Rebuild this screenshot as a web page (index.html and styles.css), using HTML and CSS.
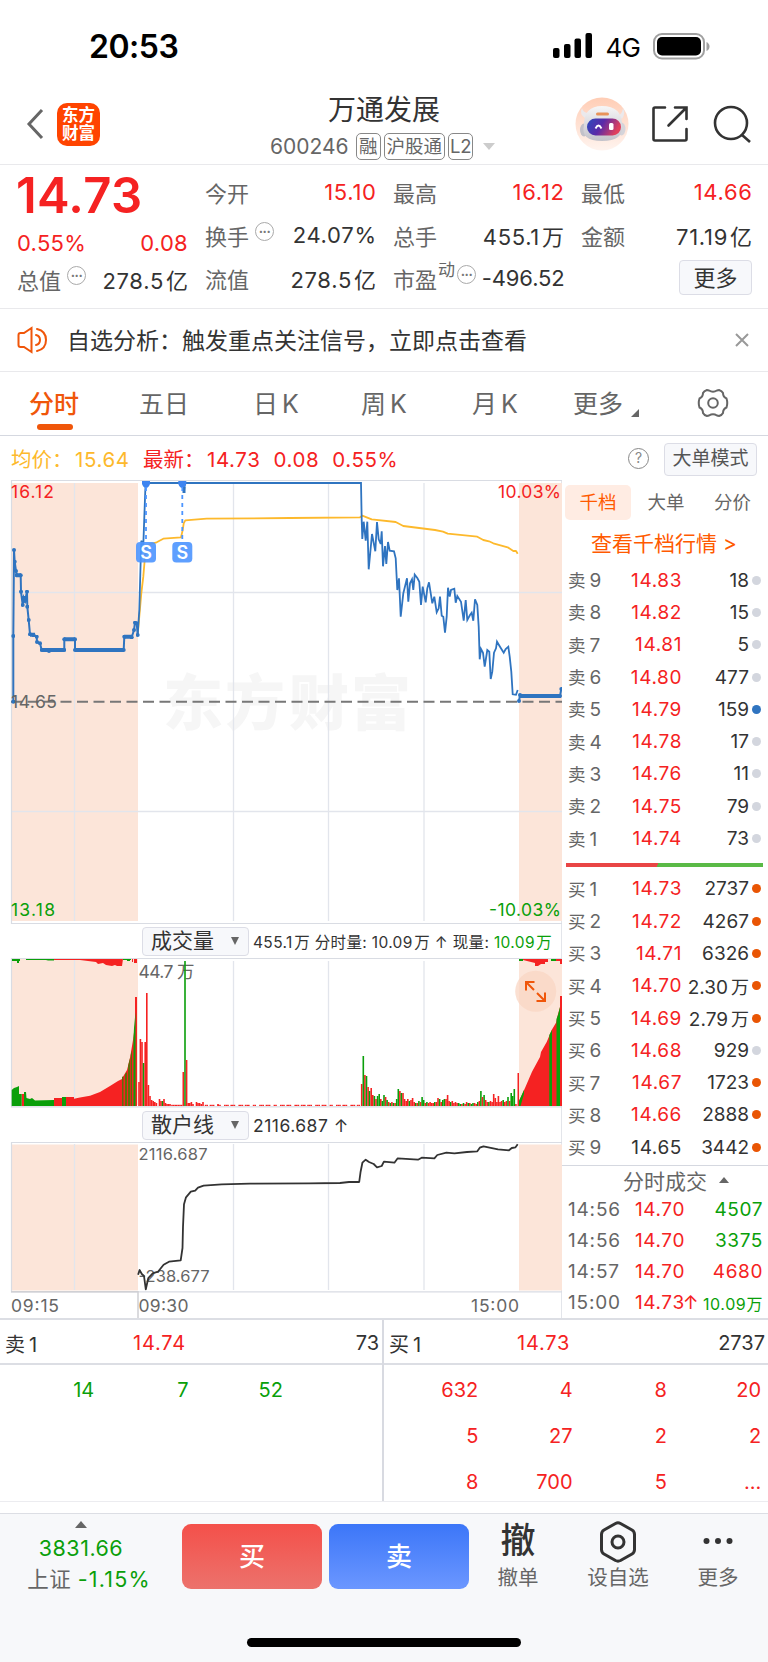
FILE: index.html
```html
<!DOCTYPE html>
<html lang="zh-CN">
<head>
    <meta charset="UTF-8">
    <meta name="viewport" content="width=device-width, initial-scale=1.0">
    <title>万通发展 600246</title>
    <link rel="stylesheet" href="styles.css">
</head>
<body>
    <div class="status-bar">
        <span class="time">20:53</span>
        <div class="status-icons">
            <svg width="40" height="26" viewBox="0 0 40 26">
                <rect x="0" y="15" width="6.5" height="10" rx="2"/>
                <rect x="11" y="11" width="6.5" height="14" rx="2"/>
                <rect x="21.5" y="5.5" width="6.5" height="19.5" rx="2"/>
                <rect x="32.5" y="0" width="6.5" height="25" rx="2"/>
            </svg>
            <span class="network">4G</span>
            <svg width="58" height="27" viewBox="0 0 58 27">
                <rect x="1" y="1" width="50" height="24.5" rx="8" fill="none" stroke="#a0a0a0" stroke-width="2"/>
                <rect x="4" y="4" width="44" height="18.5" rx="5"/>
                <path d="M53.5 9v9q3-1.500 3-4.500t-3-4.500z" fill="#a0a0a0"/>
            </svg>
        </div>
    </div>

    <header class="header">
        <div class="header-left">
            <svg width="18" height="32" viewBox="0 0 18 32"><path d="M16 2L3 16l13 14" fill="none" stroke="#666" stroke-width="3"/></svg>
            <div class="logo">东方<br>财富</div>
        </div>
        <div class="title">
            <h1>万通发展</h1>
            <div class="code-row">
                <span class="code">600246</span>
                <span class="tag">融</span>
                <span class="tag">沪股通</span>
                <span class="tag">L2</span>
                <span class="caret"></span>
            </div>
        </div>
        <div class="header-right">
            <svg width="54" height="54" viewBox="0 0 54 54">
                <defs>
                    <linearGradient id="halo" x1="0" y1="0" x2="0" y2="1"><stop offset="0" stop-color="#ffcdb5"/><stop offset="1" stop-color="#fff4ef"/></linearGradient>
                    <linearGradient id="visor" x1="0" y1="0" x2="1" y2="0.3"><stop offset="0" stop-color="#2b4bbd"/><stop offset="0.5" stop-color="#5a2aa8"/><stop offset="1" stop-color="#e0405c"/></linearGradient>
                    <linearGradient id="shell" x1="0" y1="0" x2="0" y2="1"><stop offset="0" stop-color="#f6f6f7"/><stop offset="1" stop-color="#c3c2ca"/></linearGradient>
                </defs>
                <circle cx="27" cy="27" r="26.5" fill="url(#halo)"/>
                <path d="M10 21q-6-4-3-10 1 5 7 5zM44 18q3-1 4-7 3 5-1 11z" fill="#ebe9ec"/>
                <ellipse cx="9" cy="33" rx="4" ry="6.5" fill="#c2c1c9"/>
                <ellipse cx="46.500" cy="32" rx="4" ry="6.5" fill="#d5d4da"/>
                <path d="M9 28Q9 9 27 9q20 0 20 19 2 16-20 16T9 28z" fill="url(#shell)"/>
                <rect x="12" y="21.5" width="34" height="17" rx="8.5" fill="url(#visor)"/>
                <rect x="21" y="15.5" width="13" height="3" rx="1.5" fill="#e8935a"/>
                <path d="M20.5 31.500q3-6 6 0" fill="none" stroke="#fff" stroke-width="1.800"/>
                <rect x="34" y="26" width="4.5" height="7" rx="1.5" fill="#fff"/>
            </svg>
            <svg class="share" width="38" height="38" viewBox="0 0 38 38" fill="none" stroke="#333" stroke-width="2.6" stroke-linecap="round">
                <path d="M14 2.500H4q-1.500 0-1.500 1.500v30q0 1.500 1.500 1.500h30q1.500 0 1.500-1.500V24M24 2.500h11.500V14M35 3L17.500 20.500"/>
            </svg>
            <svg width="38" height="38" viewBox="0 0 38 38" fill="none" stroke="#333" stroke-width="2.6">
                <circle cx="18" cy="18" r="16"/><path d="M28.500 29.500L37 37"/>
            </svg>
        </div>
    </header>

    <section class="quote">
        <div class="quote-col first">
            <div class="price">14.73</div>
            <div class="cell change red"><span>0.55%</span><span>0.08</span></div>
            <div class="cell"><label>总值<i class="dots">···</i></label><b>278.5<em>亿</em></b></div>
        </div>
        <div class="quote-col">
            <div class="cell"><label>今开</label><b class="red">15.10</b></div>
            <div class="cell"><label>换手<i class="dots">···</i></label><b>24.07%</b></div>
            <div class="cell"><label>流值</label><b>278.5<em>亿</em></b></div>
        </div>
        <div class="quote-col">
            <div class="cell"><label>最高</label><b class="red">16.12</b></div>
            <div class="cell"><label>总手</label><b>455.1<em>万</em></b></div>
            <div class="cell"><label>市盈<sup>动</sup><i class="dots tight">···</i></label><b class="narrow">-496.52</b></div>
        </div>
        <div class="quote-col">
            <div class="cell"><label>最低</label><b class="red">14.66</b></div>
            <div class="cell"><label>金额</label><b>71.19<em>亿</em></b></div>
            <div class="cell"><span></span><button class="more">更多</button></div>
        </div>
    </section>

    <section class="notice">
        <svg width="32" height="28" viewBox="0 0 32 28" fill="none" stroke="#f0560a" stroke-width="2">
            <path d="M14.500 2L7 7H3.500Q1.500 7 1.500 9v10q0 2 2 2H7l7.500 5z"/>
            <path d="M19 9q4 1 4 5t-4 5M20 3q9 2 9 11t-9 11" stroke-linecap="round"/>
        </svg>
        <p>自选分析：触发重点关注信号，立即点击查看</p>
        <svg width="14" height="14" viewBox="0 0 14 14"><path d="M1 1l12 12M13 1L1 13" stroke="#999" stroke-width="2"/></svg>
    </section>

    <nav class="tabs">
        <a class="active">分时</a>
        <a>五日</a>
        <a>日<span>K</span></a>
        <a>周<span>K</span></a>
        <a>月<span>K</span></a>
        <a class="tab-more">更多</a>
        <svg width="32" height="30" viewBox="0 0 32 30" fill="none" stroke="#666" stroke-width="2">
            <path d="M12 2.500q4 2.500 8 0l2-.5q3 1 4 3 0 4 3.500 5.500 1.500 4.500 0 9Q26 21 26 25q-1 2-4 3l-2-.5q-4-2.500-8 0l-2 .5q-3-1-4-3 0-4-3.500-5.500-1.500-4.500 0-9Q6 9 6 5q1-2 4-3z"/>
            <circle cx="16" cy="15" r="4.8"/>
        </svg>
    </nav>

    <div class="legend">
        <span class="avg">均价：<span>15.64</span></span>
        <span class="red last">最新：<span>14.73</span><span>0.08</span><span>0.55%</span></span>
        <i class="help">?</i>
        <button class="mode">大单模式</button>
    </div>

    <main class="main">
        <div class="charts">
            <svg class="chart" width="562" height="444" viewBox="0 480 562 444">
                <defs>
                    <marker id="dot" viewBox="0 0 4 4" refX="2" refY="2" markerWidth="4" markerHeight="4" markerUnits="userSpaceOnUse"><circle cx="2" cy="2" r="2" fill="#2f74c0"/></marker>
                </defs>
                <g fill="#fce5d9"><rect x="11" y="483" width="127" height="438"/><rect x="519" y="483" width="43" height="438"/></g>
                <g class="watermark"><text x="163" y="725">东</text><text x="225" y="725">方</text><text x="289" y="725">财</text><text x="351" y="725">富</text></g>
                <path class="grid" d="M74.500 483V921M233.500 483V921M328.500 483V921M424 483V921M11 592.500H562M11 811.500H562"/>
                <path class="frame" d="M11 480.500H562M11.500 480V923.500H562"/>
                <path d="M11 701.700H562" stroke="#777" stroke-width="2" stroke-dasharray="11 5.5"/>
                <path class="avg-line" d="M137.700 635L141.300 593.300 143.300 576.700 144.700 560 146 547.300 150 544 156.700 542.300 163.300 538.700 181 537.300 182.700 530 183.700 523.300 185.300 520.300 206.700 518.700 290 518 360 517.300 362.300 515.700 371.700 519.300 395.700 522 403.300 526 435 530 443 531.700 447.700 533.700 477.300 536.700 483.300 540 489 541.300 493.300 543.300 507.700 547.300 513.300 551 516 551 517.700 553.700"/>
                <path class="price-line pre" d="M13.300 701.700V636L14 550 14.700 561.700 16 571 16.700 575.300H20.700L21 591.700 22.700 605 23.700 597.700 25 601 27 591.700 27.300 606.700 28.700 620 30 634.300 33.500 635 36.700 636.700 37 642 40 643.300 41.700 650 49 651 50 650H64.300V639.300H75V650H123.700L124.300 636.700 131.700 637.300 134 630 135 622.700 136.700 623.300 137.700 635"/>
                <path class="price-line" d="M137.700 635L139.300 610 140.700 560 141.300 540.700 143.300 545 145.300 490 146 483H183L184 492 185 483H361L361.700 520 362.300 539 363.700 521.700 365.700 540.700 367.300 521.700 368.700 569.300 372 534 375.300 551.300 377 522 378.700 539.300 380.700 544 381.700 531.300 383 566.300 385 546 386.300 564 388 542 389.700 550.700 394 551.300 395.700 558.300 397.300 590 399 578.300 400.700 616.700 403.300 593.300 407 578.300 408.300 601.700 410 583.300 412 579.300 413.300 590 414.700 574.700 417.300 578 419.300 581.700 421 605 422.700 586.700 425.700 602.300 427.300 588.300 429 582.300 432.300 603.300 434.300 596.700 436.700 612.300 438.700 608.300 440 596.700 441.700 615.700 443.300 616.700 445 632.700 446.700 616.700 448 587.700 449.700 596.700 451 590 454.300 588.700 455.700 602.700 457.300 596 461 601.700 463.700 620.700 465.700 600 467.300 620 470 615 471.700 612.700 473.300 620.700 475 599.300 477.300 605 478.700 626.700 479.700 659.300 481 649 483 652.700 484.700 666.700 487.300 650 489.300 651.700 490.700 679 492.300 671.700 494 652.700 496 648.300 497 641.700 500 646.700 503.700 652.700 505.700 649 508.300 646.700 509.700 656.700 511.300 671.700 512.700 694.300 516 694.700 517.700 690"/>
                <path class="price-line thick" d="M16 575.300H21M30 634.700H35M42 650H64M64 639.300H75M75 650H124M124 636.700H132M520 696H561"/>
                <path class="price-line pre" d="M519 701L520 695M560 696L561.300 689"/>
                <g fill="#3d84f0"><path d="M142 481h8v3q-1.500 4-4 4t-4-4zM178.300 481h8v3q-1.500 4-4 4t-4-4z"/></g>
                <path d="M184 487v6" stroke="#2f74c0" stroke-width="3"/>
                <path d="M146 487V541M182.300 487V541" stroke="#4d95ff" stroke-width="1.8" stroke-dasharray="4 4"/>
                <g fill="#4d95ff" fill-opacity="0.9"><rect x="136" y="542" width="20" height="20.5" rx="4"/><rect x="172.3" y="542" width="20" height="20.5" rx="4"/></g>
                <g class="mark"><text x="146" y="558.8">S</text><text x="182.3" y="558.8">S</text></g>
                <g class="axis-text">
                    <text x="11" y="498" class="up" textLength="43">16.12</text>
                    <text x="561" y="498" class="up end" textLength="63">10.03%</text>
                    <text x="11" y="707.5" textLength="46">14.65</text>
                    <text x="11" y="915.5" class="down" textLength="44">13.18</text>
                    <text x="561" y="915.5" class="down end" textLength="72">-10.03%</text>
                </g>
            </svg>

            <div class="indicator">
                <button class="select">成交量<span></span></button>
                <p class="vol-info">455.1<em>万</em> 分时量: 10.09<em>万</em> ↑ 现量: <span class="green">10.09<em>万</em></span></p>
            </div>

            <svg class="chart" width="562" height="150" viewBox="0 958 562 150">
                <g fill="#fce5d9"><rect x="11" y="959" width="127" height="146"/><rect x="519" y="959" width="43" height="146"/></g>
                <path class="grid" d="M74.500 959V1106M233.500 961V1106M328.500 961V1106M424 961V1106"/>
                <path class="frame" d="M11 958.500H562M11.500 958V1106.800H562"/>
                <text x="138.5" y="978" class="axis-text" textLength="56">44.7 万</text>
                <!-- opening auction -->
                <path fill="#f52222" d="M21.700 1106V1094H24V1106zM54 1106V1098H62V1097H74V1098.700L80 1097.500 90 1095.700 100 1092 110 1086 118 1081 122 1079 124 1075 127 1070 130 1058 133 1040 135 1025V997H137V1106z"/>
                <path fill="#0a9f0a" d="M11.700 1106V1090L14 1088 17 1087 19 1086V1094H21.700V1106zM24 1106V1092H26L26.500 1098 30 1099 32 1098 35 1100.500 54 1100V1106zM62 1106V1097H66V1106zM133.500 1106V1038L134 1028 135.500 1012V1106z"/>
                <path fill="#5f6d08" d="M122 1106V1077L123.500 1076V1106zM125 1106V1074L127 1072V1106zM128 1106V1066L130 1058V1106zM130.700 1106V1055L132 1050V1106z"/>
                <path fill="#f52222" d="M54 959H123L122 966H117L115 965 112 966 106 965 103 963 98 964 96 962 80 960H54zM132 959H133V962H132zM134 959H137V963H134zM523 959H548V962H545V964H541L538 966H535V963L531 962 527 961 523 960zM555 959H562V964H560V961H555z"/>
                <path fill="#0a9f0a" d="M12 959H20V961H19V963H17V961H12zM26 959H54V960.500H48L46 960H26zM123 959H131V960H130V961H127V960H123zM519 959H523V961H519zM551 959H556V961H551z"/>
                <g id="bars"></g>
                <!-- closing auction -->
                <path fill="#f52222" d="M519 1106V1101L525 1088 532 1071.700 540 1057 541 1052 546.700 1042 551.700 1030 556 1022.700 557.500 1016 560 1007V996H562V1106zM517.500 1106V1073H519V1106z"/>
                <path fill="#0a9f0a" d="M519 1106V1101L524 1090V1094L520.500 1106zM549.300 1106V1035L552 1030V1106zM556.500 1106V1019L558 1015 560 1007V1106z"/>
                <circle cx="535.7" cy="991.3" r="20.5" fill="#f9d5c3" fill-opacity="0.75"/>
                <path d="M526 990.500V982h8.500M526.500 982.500l7.500 7.500M545 992.500v8.500h-8.500M544.500 1000.500l-7.500-7.500" fill="none" stroke="#f0560a" stroke-width="2"/>
            </svg>

            <div class="indicator second">
                <button class="select">散户线<span></span></button>
                <p>2116.687 ↑</p>
            </div>

            <svg class="chart" width="562" height="176" viewBox="0 1142 562 176">
                <g fill="#fce5d9"><rect x="11" y="1144.5" width="127" height="146"/><rect x="519" y="1144.5" width="43" height="146"/></g>
                <path class="grid" d="M74.500 1144V1290M233.500 1144V1290M328.500 1144V1290M424 1144V1290"/>
                <path class="frame" d="M11 1142.500H562M11.500 1142V1291.800H562"/>
                <path d="M11 1291.800H138V1318" fill="none" stroke="#d0d0d4" stroke-width="1.5"/>
                <g class="axis-text small">
                    <text x="138.5" y="1159.5" textLength="69">2116.687</text>
                    <text x="138.5" y="1282" textLength="71">-238.677</text>
                </g>
                <path fill="none" stroke="#333" stroke-width="1.8" stroke-linejoin="round" d="M138.100 1274.700L139.600 1270 141.800 1274 144 1276 145.800 1289.300 148.300 1278 152.700 1273.300 158 1271.700 163.600 1264.700 169 1261.700 180.700 1260.300 182.500 1248 183 1226.700 184 1204.300 186 1197.300 190.800 1191.700 195.200 1190.700 198 1187.700 203.600 1185.700 221.700 1184.300 250 1183.700 309 1183.300 340 1183 349 1182 359.200 1182 360.600 1171.700 362.400 1162.700 365.700 1159.700 369 1162 373.700 1164 377 1167.300 381.700 1166 383.900 1161.700 394.400 1162.700 397.700 1158.300 418 1159.700 421.700 1157.700 434.400 1158.300 437.300 1155 446.400 1152.700 454.400 1153.300 467 1152 477.300 1151.300 479.800 1147.700 483.500 1146.300 498 1149.300 509 1150.300 511.800 1148 515.500 1147.300 517.700 1144.300"/>
                <g class="axis-text">
                    <text x="11" y="1311.5" textLength="48">09:15</text>
                    <text x="138.5" y="1311.5" textLength="50">09:30</text>
                    <text x="519" y="1311.5" class="end" textLength="48">15:00</text>
                </g>
            </svg>
        </div>

        <aside class="book">
            <div class="book-tabs"><span class="active">千档</span><span>大单</span><span>分价</span></div>
            <div class="book-link">查看千档行情 <span>&gt;</span></div>
            <ul class="levels">
                <li><label>卖<u>9</u></label><b>14.83</b><span>18</span><i></i></li>
                <li><label>卖<u>8</u></label><b>14.82</b><span>15</span><i></i></li>
                <li><label>卖<u>7</u></label><b>14.81</b><span>5</span><i></i></li>
                <li><label>卖<u>6</u></label><b>14.80</b><span>477</span><i></i></li>
                <li><label>卖<u>5</u></label><b>14.79</b><span>159</span><i class="blue"></i></li>
                <li><label>卖<u>4</u></label><b>14.78</b><span>17</span><i></i></li>
                <li><label>卖<u>3</u></label><b>14.76</b><span>11</span><i></i></li>
                <li><label>卖<u>2</u></label><b>14.75</b><span>79</span><i></i></li>
                <li><label>卖<u>1</u></label><b>14.74</b><span>73</span><i></i></li>
            </ul>
            <div class="ratio"></div>
            <ul class="levels">
                <li><label>买<u>1</u></label><b>14.73</b><span>2737</span><i class="orange"></i></li>
                <li><label>买<u>2</u></label><b>14.72</b><span>4267</span><i class="orange"></i></li>
                <li><label>买<u>3</u></label><b>14.71</b><span>6326</span><i class="orange"></i></li>
                <li><label>买<u>4</u></label><b>14.70</b><span>2.30<em>万</em></span><i class="orange"></i></li>
                <li><label>买<u>5</u></label><b>14.69</b><span>2.79<em>万</em></span><i class="orange"></i></li>
                <li><label>买<u>6</u></label><b>14.68</b><span>929</span><i></i></li>
                <li><label>买<u>7</u></label><b>14.67</b><span>1723</span><i class="orange"></i></li>
                <li><label>买<u>8</u></label><b>14.66</b><span>2888</span><i class="orange"></i></li>
                <li><label>买<u>9</u></label><b class="flat">14.65</b><span>3442</span><i class="orange"></i></li>
            </ul>
            <div class="ticks-title">分时成交<i></i></div>
            <ul class="ticks">
                <li><label>14:56</label><b>14.70</b><span class="green">4507</span></li>
                <li><label>14:56</label><b>14.70</b><span class="green">3375</span></li>
                <li><label>14:57</label><b>14.70</b><span class="red">4680</span></li>
                <li><label>15:00</label><b>14.73<s>↑</s></b><span class="green small">10.09<em>万</em></span></li>
            </ul>
        </aside>
    </main>

    <section class="orders">
        <div class="side">
            <div class="side-head"><span>卖<u>1</u></span><b>14.74</b><span class="qty">73</span></div>
            <div class="side-grid green"><span>14</span><span>7</span><span>52</span></div>
        </div>
        <div class="side">
            <div class="side-head"><span>买<u>1</u></span><b>14.73</b><span class="qty">2737</span></div>
            <div class="side-grid red">
                <span>632</span><span>4</span><span>8</span><span>20</span>
                <span>5</span><span>27</span><span>2</span><span>2</span>
                <span>8</span><span>700</span><span>5</span><span>...</span>
            </div>
        </div>
    </section>

    <footer class="footer">
        <div class="toolbar">
            <div class="index">
                <i></i>
                <div class="green">3831.66</div>
                <div class="index-name">上证 <span class="green">-1.15%</span></div>
            </div>
            <button class="trade buy">买</button>
            <button class="trade sell">卖</button>
            <div class="tool"><strong>撤</strong>撤单</div>
            <div class="tool">
                <svg width="42" height="42" viewBox="0 0 42 42" fill="none" stroke="#333" stroke-width="3">
                    <path d="M18.500 2.500q2.500-1.300 5 0l11.500 6.500q2.500 1.500 2.500 4.500v15q0 3-2.500 4.500l-11.500 6.500q-2.500 1.300-5 0L7 33q-2.500-1.500-2.500-4.500v-15Q4.500 10.500 7 9z"/>
                    <circle cx="21" cy="21" r="6"/>
                </svg>设自选
            </div>
            <div class="tool">
                <svg width="42" height="42" viewBox="0 0 42 42" fill="#333"><circle cx="9.5" cy="20" r="3"/><circle cx="21" cy="20" r="3"/><circle cx="32.5" cy="20" r="3"/></svg>更多
            </div>
        </div>
        <div class="home-bar"></div>
    </footer>

    <script>
    // per-minute volume: [x, height, colour]
    const bars = [
        [139, 24, 'r'], [140.4, 67, 'r'], [142, 64, 'r'], [143.6, 43, 'g'], [145.2, 64, 'r'], [146.8, 113, 'r'],
        [148.4, 21, 'r'], [150, 10, 'r'], [151.6, 6, 'r'], [153.2, 5, 'r'], [154.8, 4, 'r'], [156.4, 3, 'r'],
        [159.5, 7, 'r'], [161, 5, 'r'], [162.6, 5, 'g'], [164, 7, 'r'], [165.5, 3, 'r'], [167, 2, 'r'], [168.5, 2, 'r'], [170, 2, 'r'],
        [183.3, 34, 'r'], [185, 145, 'g'], [186.6, 46, 'r'], [188.2, 3, 'r'], [189.8, 3, 'r'], [191.4, 4, 'r'], [193, 2, 'r'],
        [196.5, 4, 'r'], [198, 3, 'r'], [199.6, 3, 'r'], [201.2, 2, 'r'], [203, 4, 'r'], [218, 2, 'r']
    ];
    for (let x = 172; x < 360; x += 1.6) {
        if (x < 183 || (x > 204 && x % 7 < 4.5)) bars.push([x, 1.2, 'r']);
    }

    const afternoon = '22r 50g 31r 30g 19r 15g 18r 11r 10g 7r 10g 12g 7r 5g 11g 9r 6g 4r 3g 4r 3g 3r 7g 17g 15r 13g 13r 7r 5r 7r 5g 6r 8r 4r 3g 3r 5g 4r 9g 6g 3r 4g 3r 4r 3r 3r 4g 4r 8r 7g 4r 6g 7g 7r 11r 5r 4g 5r 3r 4r 3r 3g 2g 2r 3g 2r 4r 3g 3r 2g 3g 3r 2r 4g 5r 15g 9r 11g 6r 4r 4g 5r 4r 12r 8r 4r 10r 4r 5r 6g 4r 5r 9g 5r 13g 10g 17g 2r'.split(' ');
    afternoon.forEach((v, i) => bars.push([361.7 + i * 1.59, parseFloat(v), v.slice(-1)]));

    document.getElementById('bars').innerHTML = bars.map(([x, h, c]) =>
        `<rect x="${(x - 0.8).toFixed(1)}" y="${1106 - h}" width="1.6" height="${h}" fill="${c === 'r' ? '#f52222' : '#0a9f0a'}"/>`
    ).join('');
    </script>
</body>
</html>
```

FILE: styles.css
```css
* {
    box-sizing: border-box;
}

body {
    margin: 0;
    width: 768px;
    height: 1662px;
    overflow: hidden;
    background-color: #fff;
    color: #333;
    font-family: Inter, "Noto Sans CJK SC", sans-serif;
    font-size: 20px;
}

h1, p, ul {
    margin: 0;
    padding: 0;
}

ul {
    list-style: none;
}

b, em, i {
    font-weight: normal;
    font-style: normal;
}

s, u {
    text-decoration: none;
}

button {
    font-family: inherit;
    color: #333;
    padding: 0;
    background-color: #f7f8fb;
    border: 1px solid #dcdde6;
    border-radius: 4px;
}

svg {
    display: block;
    flex: none;
}

.red {
    color: #f52222;
}

.green {
    color: #0a9f0a;
}

/* status bar */
.status-bar {
    display: flex;
    justify-content: space-between;
    align-items: center;
    height: 92px;
    padding: 0 57px 0 89px;
    color: #000;
}

.time {
    font-size: 32px;
    font-weight: 600;
    letter-spacing: -0.5px;
}

.status-icons {
    display: flex;
    align-items: center;
}

.network {
    margin: 3px 13px 0 12px;
    font-size: 26px;
    letter-spacing: -0.8px;
}

/* header */
.header {
    display: grid;
    grid-template-columns: 240px 1fr 240px;
    height: 73px;
    border-bottom: 1px solid #e9e9ec;
}

.header-left {
    display: flex;
    align-items: center;
    gap: 13px;
    height: 64px;
    padding-left: 26px;
}

.logo {
    width: 43px;
    height: 43px;
    padding-top: 3px;
    border-radius: 10px;
    background-color: #ff4400;
    color: #fff;
    font-size: 16.5px;
    font-weight: bold;
    line-height: 18px;
    text-align: center;
}

.title {
    text-align: center;
}

.title h1 {
    height: 40px;
    line-height: 36px;
    font-size: 28px;
    font-weight: normal;
}

.code-row {
    display: flex;
    align-items: center;
    height: 29px;
    padding-left: 30px;
    color: #666;
}

.code {
    width: 86px;
    font-size: 21px;
    text-align: left;
}

.tag {
    height: 27px;
    margin-right: 3px;
    padding: 0 2px;
    border: 1.5px solid #888;
    border-radius: 5px;
    font-size: 18.5px;
    line-height: 24px;
}

.tag:nth-child(4) {
    padding: 0 1px;
    letter-spacing: -0.3px;
}

.caret {
    margin-left: 7px;
    border: 6.5px solid transparent;
    border-top: 7px solid #ccc;
    border-bottom: 0;
}

.header-right {
    display: flex;
    align-items: center;
    height: 64px;
    padding-left: 46.5px;
}

.share {
    margin: 0 24px 0 22px;
}

/* quote */
.quote {
    display: grid;
    grid-template-columns: 170px 170px 170px 170px;
    gap: 18px;
    height: 144px;
    padding: 5px 0 0 18px;
    border-bottom: 1px solid #e9e9ec;
}

.quote-col {
    display: grid;
    grid-template-rows: 43px 43px 43px;
    margin-left: -1px;
}

.quote-col.first {
    grid-template-rows: 52px 41px 31px;
}

.price {
    margin-left: -1px;
    color: #f52222;
    font-size: 49px;
    font-weight: 600;
    line-height: 52px;
    letter-spacing: 0.3px;
}

.cell {
    display: flex;
    justify-content: space-between;
    align-items: center;
    white-space: nowrap;
    font-size: 22px;
}

.cell label {
    display: flex;
    color: #666;
}

.cell b {
    letter-spacing: 0.7px;
    margin-right: -0.7px;
}

.cell .narrow {
    letter-spacing: -0.1px;
}

.change {
    letter-spacing: 0.3px;
}

.cell em {
    margin-left: 2px;
}

.cell sup {
    margin-left: 1px;
    margin-top: -2px;
    font-size: 17px;
    line-height: 20px;
}

.dots {
    width: 19px;
    height: 19px;
    margin: 3px 0 0 6px;
    border: 1.5px solid #aaa;
    border-radius: 50%;
    color: #777;
    font-size: 13px;
    font-weight: bold;
    line-height: 16px;
    text-align: center;
    letter-spacing: -0.5px;
}

.dots.tight {
    margin-left: 2px;
}

.more {
    width: 73px;
    height: 35px;
    font-size: 22px;
    line-height: 30px;
}

/* notice */
.notice {
    display: flex;
    align-items: center;
    height: 63px;
    padding: 0 19px 0 17px;
    border-bottom: 1px solid #e9e9ec;
}

.notice p {
    flex: 1;
    margin: -3px 0 0 18px;
    font-size: 23px;
}

/* period tabs */
.tabs {
    display: flex;
    height: 64px;
    padding-left: 29px;
    border-bottom: 1px solid #d5d8e0;
    font-size: 25px;
    line-height: 65px;
    color: #666;
}

.tabs a {
    width: 110px;
}

.tabs a:nth-child(2) {
    width: 114px;
}

.tabs a:nth-child(3) {
    width: 108px;
}

.tabs a:nth-child(4) {
    width: 111px;
}

.tabs a:nth-child(5) {
    width: 101px;
}

.tabs a span {
    margin-left: 4px;
}

.tabs .active {
    color: #f0560a;
    font-weight: 500;
}

.tabs .active::after {
    content: "";
    display: block;
    width: 36px;
    height: 6px;
    margin: -13px 0 0 8px;
    border-radius: 3px;
    background-color: #f0560a;
}

.tabs .tab-more {
    display: flex;
    width: 124px;
}

.tab-more::after {
    content: "";
    margin: 37px 0 0 8px;
    height: 0;
    border-left: 8px solid transparent;
    border-bottom: 8px solid #666;
}

.tabs svg {
    margin-top: 16px;
}

/* legend */
.legend {
    display: flex;
    align-items: center;
    height: 44px;
    padding: 0 11px;
    font-size: 20.5px;
    white-space: nowrap;
}

.legend .avg {
    width: 132px;
    color: #fdb92c;
}

.avg span, .last span {
    margin-left: 2.5px;
    letter-spacing: 0.6px;
}

.last {
    flex: 1;
}

.last span {
    margin-right: 10.5px;
}

.help {
    width: 21px;
    height: 21px;
    margin-right: 15px;
    border: 1.5px solid #888;
    border-radius: 50%;
    color: #888;
    font-size: 14px;
    line-height: 18px;
    text-align: center;
}

.mode {
    width: 93px;
    height: 33px;
    margin-top: 2px;
    font-size: 19px;
    line-height: 28px;
    color: #555;
}

/* charts */
.main {
    display: flex;
    height: 838px;
}

.charts {
    width: 562px;
    border-right: 1px solid #e3e5ea;
}

.grid {
    fill: none;
    stroke: #e2e5ec;
    stroke-width: 1.3;
}

.frame {
    fill: none;
    stroke: #d9dce3;
    stroke-width: 1.2;
}

.watermark {
    font-size: 60px;
    font-weight: 900;
    fill: #f6f6f6;
}

.avg-line {
    fill: none;
    stroke: #fdb92c;
    stroke-width: 1.8;
    stroke-linejoin: round;
}

.price-line {
    fill: none;
    stroke: #2f74c0;
    stroke-width: 1.8;
}

.price-line.pre {
    stroke-width: 2;
    marker: url(#dot);
}

.price-line.thick {
    stroke-width: 4;
}

.mark {
    font-size: 18px;
    font-weight: 600;
    fill: #fff;
    text-anchor: middle;
}

.axis-text {
    font-size: 17.5px;
    fill: #666;
}

.axis-text.small {
    font-size: 16.5px;
}

.axis-text .end {
    text-anchor: end;
}

.axis-text .up {
    fill: #f52222;
}

.axis-text .down {
    fill: #0a9f0a;
}

.indicator {
    display: flex;
    align-items: center;
    height: 34px;
    padding-left: 142px;
    white-space: nowrap;
    font-size: 17.5px;
    letter-spacing: 0.5px;
}

.select {
    display: flex;
    align-items: center;
    width: 107px;
    height: 29px;
    margin-right: 4px;
    padding-left: 8px;
    font-size: 21px;
    line-height: 24px;
}

.select span {
    margin-left: 17px;
    border: 4.5px solid transparent;
    border-top: 8px solid #666;
    border-bottom: 0;
}

.vol-info {
    font-size: 15.5px;
    letter-spacing: 0.35px;
}

.vol-info em {
    margin-left: 1.5px;
}

/* order book */
.book {
    flex: 1;
}

.book-tabs {
    display: flex;
    justify-content: space-between;
    height: 40px;
    padding: 5px 4px 0 3px;
    font-size: 18.5px;
    line-height: 34px;
    color: #666;
    text-align: center;
}

.book-tabs span {
    width: 66px;
    height: 35px;
}

.book-tabs span:last-child {
    width: 63px;
}

.book-tabs .active {
    border-radius: 5px;
    background-color: #ffece3;
    color: #ff5a00;
}

.book-link {
    height: 44px;
    padding-left: 29px;
    line-height: 48px;
    font-size: 21px;
    color: #ff5a00;
}

.levels li {
    display: flex;
    align-items: center;
    height: 32.3px;
    padding: 0 7px 0 6px;
    font-size: 19px;
    white-space: nowrap;
}

.levels label, .ticks label {
    width: 50px;
    color: #666;
}

.levels label {
    margin-top: -1px;
    font-size: 17.5px;
}

.levels u {
    margin-left: 4px;
    font-size: 19px;
}

.levels b {
    width: 64px;
    text-align: right;
    color: #f52222;
    letter-spacing: 0.6px;
}

.levels .flat {
    color: #333;
}

.levels span {
    flex: 1;
    text-align: right;
}

.levels em {
    margin-left: 3px;
    font-size: 18px;
}

.levels i {
    width: 9px;
    height: 9px;
    margin-left: 3px;
    border-radius: 50%;
    background-color: #d3d6de;
}

.levels .blue {
    background-color: #2f74c0;
}

.levels .orange {
    background-color: #e95504;
}

.ratio {
    height: 4px;
    margin: 8px 5px 6px 4px;
    background: linear-gradient(120deg, #e94545 46.5%, #5aba46 46.5%);
}

.ticks-title {
    display: flex;
    align-items: center;
    height: 29px;
    margin-top: 2px;
    padding-left: 61px;
    border-top: 1px solid #d5d8e0;
    font-size: 21px;
    color: #666;
}

.ticks-title i {
    margin-left: 12px;
    border: 5px solid transparent;
    border-bottom: 6px solid #666;
    border-top: 0;
}

.ticks li {
    display: flex;
    align-items: center;
    height: 31px;
    padding: 0 5px 0 6px;
    white-space: nowrap;
    font-size: 19px;
    letter-spacing: 0.6px;
}

.ticks label {
    width: 67px;
    letter-spacing: 0.8px;
}

.ticks b {
    width: 62px;
    color: #f52222;
}

.ticks s {
    margin-left: -2px;
}

.ticks span {
    flex: 1;
    text-align: right;
}

.ticks .small {
    font-size: 16px;
}

/* queue */
.orders {
    display: flex;
    height: 184px;
    border-top: 2px solid #dcdee4;
    border-bottom: 1px solid #ececf0;
}

.side {
    width: 384px;
}

.side:first-child {
    border-right: 2px solid #d8dae1;
}

.side-head {
    display: grid;
    grid-template-columns: 128px 1fr 60px;
    align-items: center;
    height: 45px;
    padding: 3px 3px 0 5px;
    border-bottom: 2px solid #dcdee4;
    white-space: nowrap;
}

.side-head u {
    margin-left: 4px;
}

.side-head b {
    color: #f52222;
    letter-spacing: 0.8px;
}

.qty {
    text-align: right;
}

.side-grid {
    display: grid;
    grid-template-columns: repeat(4, 94.3px);
    grid-auto-rows: 46px;
    padding-top: 2px;
    line-height: 46px;
    text-align: right;
}

/* footer */
.footer {
    height: 150px;
    margin-top: 11px;
    border-top: 1px solid #dcdee4;
    background-color: #f7f8fa;
}

.toolbar {
    display: flex;
    height: 124px;
    padding-top: 7px;
}

.index {
    width: 162px;
    margin-right: 20px;
    text-align: center;
    font-size: 21.5px;
    line-height: 31px;
    letter-spacing: 0.5px;
    color: #666;
}

.index-name {
    padding-left: 16px;
    white-space: nowrap;
}

.index-name span {
    letter-spacing: 1.2px;
}

.index i {
    display: block;
    width: 0;
    margin: 0 auto 5px;
    border: 6px solid transparent;
    border-bottom: 7px solid #666;
    border-top: 0;
}

.trade {
    width: 140px;
    height: 65px;
    margin: 3px 7px 0 0;
    border: none;
    border-radius: 9px;
    color: #fff;
    font-size: 26px;
    font-weight: 500;
    line-height: 60px;
}

.buy {
    background: linear-gradient(#f4504a, #ec726c);
}

.sell {
    background: linear-gradient(#3c76f8, #6b97ff);
}

.tool {
    display: flex;
    flex-direction: column;
    align-items: center;
    width: 100px;
    margin-left: -8px;
    font-size: 20.5px;
    line-height: 29px;
    color: #666;
}

.tool:nth-child(n+5) {
    margin-left: 0;
}

.tool strong {
    height: 42px;
    font-size: 35px;
    font-weight: 500;
    line-height: 39px;
    color: #333;
}

.home-bar {
    width: 274px;
    height: 9px;
    margin: 0 auto;
    border-radius: 5px;
    background-color: #000;
}
```
